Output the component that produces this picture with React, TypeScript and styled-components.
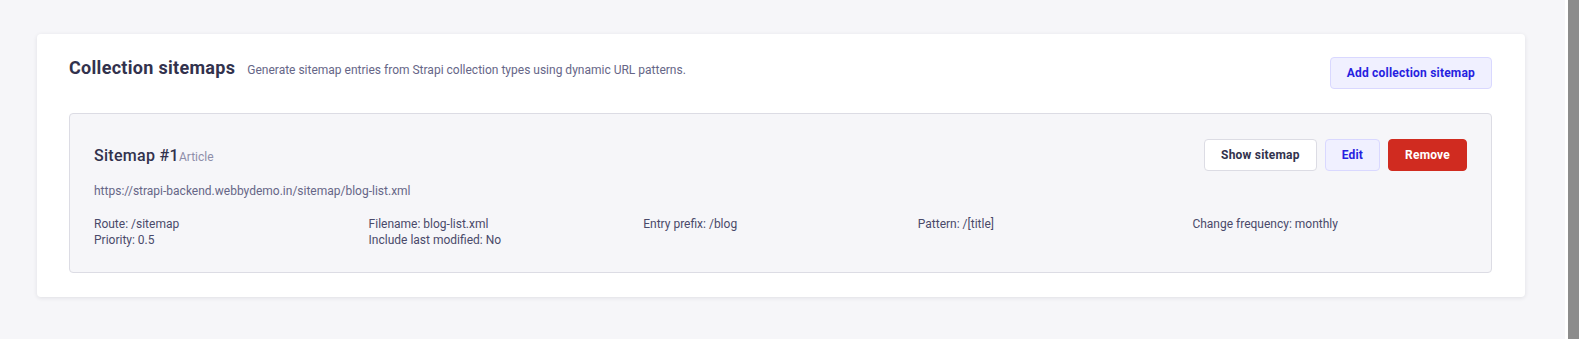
import React from "react";
import styled, { createGlobalStyle } from "styled-components";

const Global = createGlobalStyle`
  html, body { margin: 0; padding: 0; overflow: hidden; }
  body { background: #f6f6f9; font-family: Roboto, "Liberation Sans", Arial, sans-serif; }
  * { box-sizing: border-box; }
`;

const Frame = styled.div`
  display: flex;
  height: 100vh;
  overflow: hidden;
`;

const Page = styled.main`
  flex: 1;
  min-width: 0;
  padding: 34px 40px 0 37px;
`;

const Scrollbar = styled.div`
  flex: 0 0 14px;
  background: #ffffff;
  padding-left: 3px;
  display: flex;
`;

const Thumb = styled.div`
  flex: 1;
  background: #8c8c8c;
`;

const Card = styled.section`
  background: #ffffff;
  border-radius: 4px;
  box-shadow: 0 1px 4px rgba(33, 33, 52, 0.1);
  padding: 23px 33px 24px 32px;
`;

const Header = styled.div`
  display: flex;
  justify-content: space-between;
  align-items: flex-start;
  margin-bottom: 24px;
`;

const TitleGroup = styled.div`
  display: flex;
  align-items: baseline;
  gap: 12px;
  line-height: 22px;
`;

const Title = styled.h2`
  margin: 0;
  font-size: 18px;
  font-weight: 700;
  letter-spacing: 0.3px;
  color: #32324d;
`;

const Subtitle = styled.span`
  font-size: 12px;
  color: #666687;
`;

const Button = styled.button<{ $variant: "secondary" | "tertiary" | "danger" }>`
  height: 32px;
  padding: 0 16px;
  border-radius: 4px;
  font-family: inherit;
  font-size: 12px;
  font-weight: 700;
  letter-spacing: 0.2px;
  cursor: pointer;
  border: 1px solid
    ${(p) => (p.$variant === "secondary" ? "#d9d8ff" : p.$variant === "danger" ? "#d02b20" : "#dcdce4")};
  background: ${(p) => (p.$variant === "secondary" ? "#f0f0ff" : p.$variant === "danger" ? "#d02b20" : "#ffffff")};
  color: ${(p) => (p.$variant === "secondary" ? "#271fe0" : p.$variant === "danger" ? "#ffffff" : "#32324d")};
`;

const Entry = styled.article`
  background: #f6f6f9;
  border: 1px solid #dcdce4;
  border-radius: 4px;
  padding: 25px 24px 24px;
`;

const EntryHead = styled.div`
  display: flex;
  justify-content: space-between;
  align-items: center;
`;

const EntryTitle = styled.div`
  display: flex;
  align-items: baseline;
`;

const Name = styled.span`
  font-size: 16px;
  font-weight: 500;
  letter-spacing: 0.3px;
  color: #32324d;
`;

const Kind = styled.span`
  font-size: 12px;
  color: #8e8ea9;
`;

const Actions = styled.div`
  display: flex;
  gap: 8px;
`;

const Url = styled.div`
  margin-top: 12px;
  font-size: 12px;
  line-height: 16px;
  color: #666687;
`;

const Details = styled.div`
  margin-top: 17px;
  display: grid;
  grid-template-columns: repeat(5, 1fr);
`;

const Column = styled.div`
  display: flex;
  flex-direction: column;
  font-size: 12px;
  line-height: 16px;
  color: #4a4a6a;
`;

const columns = [
  ["Route: /sitemap", "Priority: 0.5"],
  ["Filename: blog-list.xml", "Include last modified: No"],
  ["Entry prefix: /blog"],
  ["Pattern: /[title]"],
  ["Change frequency: monthly"],
];

export default function App() {
  return (
    <>
      <Global />
      <Frame>
        <Page>
          <Card>
            <Header>
              <TitleGroup>
                <Title>Collection sitemaps</Title>
                <Subtitle>Generate sitemap entries from Strapi collection types using dynamic URL patterns.</Subtitle>
              </TitleGroup>
              <Button $variant="secondary">Add collection sitemap</Button>
            </Header>
            <Entry>
              <EntryHead>
                <EntryTitle>
                  <Name>Sitemap #1</Name>
                  <Kind>Article</Kind>
                </EntryTitle>
                <Actions>
                  <Button $variant="tertiary">Show sitemap</Button>
                  <Button $variant="secondary">Edit</Button>
                  <Button $variant="danger">Remove</Button>
                </Actions>
              </EntryHead>
              <Url>https://strapi-backend.webbydemo.in/sitemap/blog-list.xml</Url>
              <Details>
                {columns.map((c, i) => (
                  <Column key={i}>
                    {c.map((t) => (
                      <span key={t}>{t}</span>
                    ))}
                  </Column>
                ))}
              </Details>
            </Entry>
          </Card>
        </Page>
        <Scrollbar>
          <Thumb />
        </Scrollbar>
      </Frame>
    </>
  );
}
